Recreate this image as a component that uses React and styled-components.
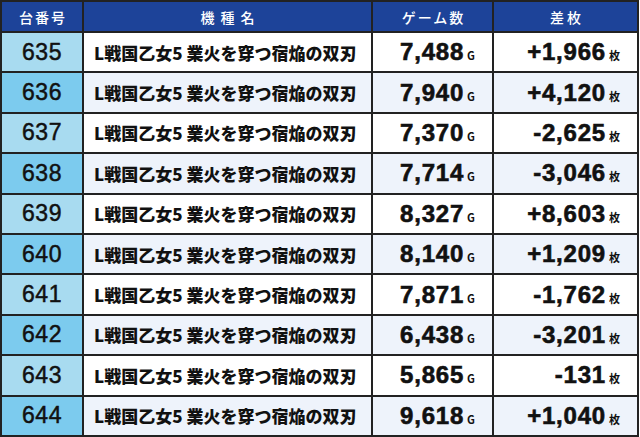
import React from "react";
import styled, { createGlobalStyle } from "styled-components";

const GlobalStyle = createGlobalStyle`
  html, body {
    margin: 0;
    padding: 0;
    background: #fff;
  }
`;

const rows = [
  { no: 635, games: "7,488", diff: "+1,966" },
  { no: 636, games: "7,940", diff: "+4,120" },
  { no: 637, games: "7,370", diff: "-2,625" },
  { no: 638, games: "7,714", diff: "-3,046" },
  { no: 639, games: "8,327", diff: "+8,603" },
  { no: 640, games: "8,140", diff: "+1,209" },
  { no: 641, games: "7,871", diff: "-1,762" },
  { no: 642, games: "6,438", diff: "-3,201" },
  { no: 643, games: "5,865", diff: "-131" },
  { no: 644, games: "9,618", diff: "+1,040" },
];

const MACHINE = "L戦国乙女5 業火を穿つ宿焔の双刃";

const Table = styled.div`
  width: 639px;
  height: 437px;
  box-sizing: border-box;
  padding: 2px;
  display: grid;
  grid-template-columns: 80px 287px 119px 1fr;
  grid-template-rows: 29px repeat(10, 1fr);
  gap: 2px;
  background: #222;
`;

const HeadCell = styled.div`
  background: #1d4399;
  color: #fff;
  display: flex;
  align-items: center;
  justify-content: center;
  font-family: "Noto Sans CJK JP", "Liberation Sans", sans-serif;
  font-size: 14px;
  font-weight: 500;
  letter-spacing: ${(p) => p.$spacing || "2px"};
  padding-left: ${(p) => p.$spacing || "2px"};
`;

const NoCell = styled.div`
  background: ${(p) => (p.$alt ? "#7ccbee" : "#a8dbf0")};
  display: flex;
  align-items: center;
  justify-content: center;
  font-family: "Liberation Sans", Arial, sans-serif;
  font-size: 23px;
  letter-spacing: 0.5px;
  color: #111;
  -webkit-text-stroke: 0.5px #111;
`;

const Cell = styled.div`
  background: ${(p) => (p.$alt ? "#eef3fb" : "#fff")};
  display: flex;
  align-items: center;
  justify-content: ${(p) => (p.$right ? "flex-end" : "flex-start")};
  padding: ${(p) => (p.$right ? "0 17px 0 0" : "0 0 0 10px")};
  color: #111;
`;

const Name = styled.span`
  font-family: "Noto Sans CJK JP", "Liberation Sans", sans-serif;
  font-size: 17px;
  font-weight: 900;
  white-space: nowrap;
`;

const Value = styled.span`
  white-space: nowrap;
  line-height: 1;
`;

const Num = styled.span`
  font-family: "Liberation Sans", Arial, sans-serif;
  font-size: 24px;
  font-weight: 700;
  letter-spacing: 0.8px;
  -webkit-text-stroke: 0.6px #111;
`;

const Unit = styled.span`
  font-family: "Noto Sans CJK JP", "Liberation Sans", sans-serif;
  font-size: 11px;
  font-weight: 700;
  margin-left: 3px;
`;

export default function App() {
  return (
    <>
      <GlobalStyle />
      <Table>
        <HeadCell>台番号</HeadCell>
        <HeadCell $spacing="6px">機種名</HeadCell>
        <HeadCell>ゲーム数</HeadCell>
        <HeadCell $spacing="3px">差枚</HeadCell>
        {rows.map((r, i) => {
          const alt = i % 2 === 1;
          return (
            <React.Fragment key={r.no}>
              <NoCell $alt={alt}>{r.no}</NoCell>
              <Cell $alt={alt}>
                <Name>{MACHINE}</Name>
              </Cell>
              <Cell $alt={alt} $right>
                <Value>
                  <Num>{r.games}</Num>
                  <Unit>G</Unit>
                </Value>
              </Cell>
              <Cell $alt={alt} $right>
                <Value>
                  <Num>{r.diff}</Num>
                  <Unit>枚</Unit>
                </Value>
              </Cell>
            </React.Fragment>
          );
        })}
      </Table>
    </>
  );
}
